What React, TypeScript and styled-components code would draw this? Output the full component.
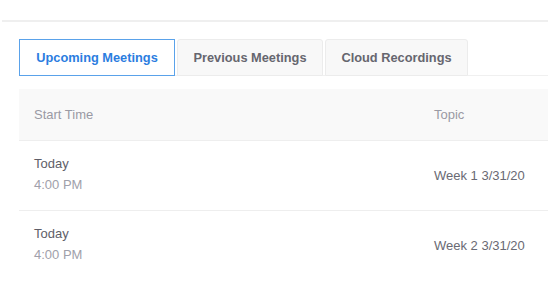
import React from "react";
import styled, { createGlobalStyle } from "styled-components";

const Global = createGlobalStyle`
  html, body { margin: 0; padding: 0; background: #ffffff; }
  body { font-family: "Liberation Sans", Arial, sans-serif; overflow: hidden; }
`;

const Page = styled.div`
  width: 548px;
  height: 283px;
  background: #fff;
  overflow: hidden;
`;

const TopBar = styled.div`
  height: 20px;
  margin-left: 2px;
  border-bottom: 2px solid #efefef;
`;

const Content = styled.div`
  padding: 17px 0 0 19px;
`;

const TabRow = styled.div`
  display: flex;
  align-items: flex-end;
  gap: 2px;
  border-bottom: 1px solid #f0f0f0;
`;

const Tab = styled.div<{ $active?: boolean; $width: number }>`
  box-sizing: border-box;
  width: ${(p) => p.$width}px;
  height: 37px;
  display: flex;
  align-items: center;
  justify-content: center;
  font-size: 12.8px;
  font-weight: bold;
  color: ${(p) => (p.$active ? "#2b7ddf" : "#66666f")};
  background: ${(p) => (p.$active ? "#ffffff" : "#f8f8f8")};
  border: 1px solid ${(p) => (p.$active ? "#5aa2ea" : "#ececec")};
  border-radius: ${(p) => (p.$active ? "0" : "3px 3px 0 0")};
  margin-bottom: -1px;
`;

const Table = styled.div`
  margin-top: 13px;
`;

const Row = styled.div<{ $header?: boolean }>`
  display: grid;
  grid-template-columns: 415px 1fr;
  align-items: center;
  height: ${(p) => (p.$header ? 51 : 69)}px;
  background: ${(p) => (p.$header ? "#f9f9f9" : "#ffffff")};
  border-bottom: 1px solid #eeeeee;
  &:last-child { border-bottom: none; }
`;

const Cell = styled.div`
  padding-left: 15px;
  font-size: 13px;
  line-height: 21px;
`;

const HeadCell = styled(Cell)`
  color: #9a9aa4;
`;

const Day = styled.div`
  color: #5e5e68;
  margin-top: -3px;
`;

const Time = styled.div`
  color: #a0a0aa;
`;

const TopicCell = styled(Cell)`
  padding-left: 0;
  color: #6a6a73;
`;

const HeadTopic = styled(HeadCell)`
  padding-left: 0;
`;

const meetings = [
  { day: "Today", time: "4:00 PM", topic: "Week 1 3/31/20" },
  { day: "Today", time: "4:00 PM", topic: "Week 2 3/31/20" },
];

export default function App() {
  return (
    <Page>
      <Global />
      <TopBar />
      <Content>
        <TabRow>
          <Tab $active $width={156}>Upcoming Meetings</Tab>
          <Tab $width={146}>Previous Meetings</Tab>
          <Tab $width={143}>Cloud Recordings</Tab>
        </TabRow>
        <Table>
          <Row $header>
            <HeadCell>Start Time</HeadCell>
            <HeadTopic>Topic</HeadTopic>
          </Row>
          {meetings.map((m, i) => (
            <Row key={i}>
              <Cell>
                <Day>{m.day}</Day>
                <Time>{m.time}</Time>
              </Cell>
              <TopicCell>{m.topic}</TopicCell>
            </Row>
          ))}
        </Table>
      </Content>
    </Page>
  );
}
